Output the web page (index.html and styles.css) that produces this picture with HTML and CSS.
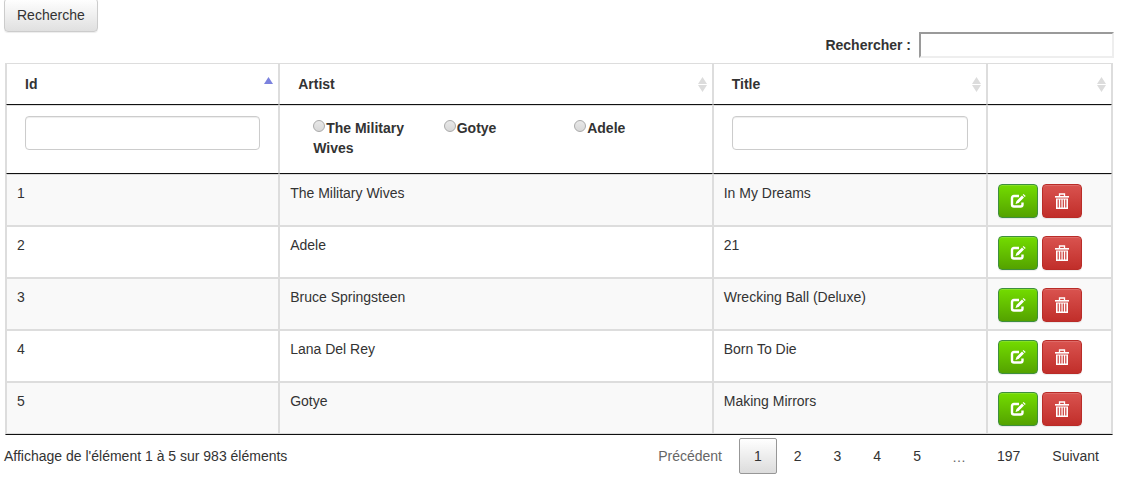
FILE: index.html
```html
<!DOCTYPE html>
<html lang="fr">
<head>
<meta charset="utf-8">
<title>Albums</title>
<link rel="stylesheet" href="styles.css">
</head>
<body>
<svg class="sprite" aria-hidden="true">
  <symbol id="sort" viewBox="0 0 9 15"><path d="M4.500 0L9 7H0zM0 8h9l-4.500 7z"/></symbol>
  <symbol id="sort-up" viewBox="0 0 9 15"><path d="M4.500 0L9 7H0z"/></symbol>
  <symbol id="edit" viewBox="0 0 16 14">
    <path d="M9 2H4Q2 2 2 4v6.500q0 2 2 2h6.500q2 0 2-2V8.500" fill="none" stroke="currentColor" stroke-width="2.400"/>
    <path d="M5.500 10l1-3L12 1.500l2 2L8.500 9zM12.700.8l.8-.8L15.700 2l-.9.900z" fill="currentColor"/>
  </symbol>
  <symbol id="trash" viewBox="0 0 14 16">
    <path d="M4.500 3V1h5v2" fill="none" stroke="currentColor" stroke-width="1.300"/>
    <path d="M0 3h14v1.600H0z" fill="currentColor"/>
    <path d="M1 5.400h12V16H1zM2.600 6.500v8h1.200v-8zM5.200 6.500v8h1.200v-8zM7.700 6.500v8h1.200v-8zM10.200 6.500v8h1.200v-8z" fill="currentColor" fill-rule="evenodd"/>
  </symbol>
</svg>
<main class="page">
  <button type="button" class="btn btn-default">Recherche</button>
  <div class="filter">
    <label class="filter-label" for="search">Rechercher :</label>
    <input class="filter-input" id="search" type="search">
  </div>
  <table class="grid">
    <colgroup><col class="col-id"><col class="col-artist"><col class="col-title"><col></colgroup>
    <thead>
      <tr>
        <th scope="col" aria-sort="ascending"><button type="button" class="sort">Id<svg class="sort-icon active"><use href="#sort-up"/></svg></button></th>
        <th scope="col"><button type="button" class="sort">Artist<svg class="sort-icon"><use href="#sort"/></svg></button></th>
        <th scope="col"><button type="button" class="sort">Title<svg class="sort-icon"><use href="#sort"/></svg></button></th>
        <th scope="col"><button type="button" class="sort" aria-label="Actions"><span></span><svg class="sort-icon"><use href="#sort"/></svg></button></th>
      </tr>
      <tr class="filters">
        <th><input class="control" type="text" aria-label="Id"></th>
        <th>
          <div class="choices">
            <label class="choice"><input class="radio" type="radio" name="artist">The Military Wives</label>
            <label class="choice"><input class="radio" type="radio" name="artist">Gotye</label>
            <label class="choice"><input class="radio" type="radio" name="artist">Adele</label>
          </div>
        </th>
        <th><input class="control" type="text" aria-label="Title"></th>
        <th></th>
      </tr>
    </thead>
    <tbody>
      <tr><td>1</td><td>The Military Wives</td><td>In My Dreams</td><td><div class="actions"><button type="button" class="btn btn-edit" aria-label="Modifier"><svg class="icon-edit"><use href="#edit"/></svg></button><button type="button" class="btn btn-delete" aria-label="Supprimer"><svg class="icon-trash"><use href="#trash"/></svg></button></div></td></tr>
      <tr><td>2</td><td>Adele</td><td>21</td><td><div class="actions"><button type="button" class="btn btn-edit" aria-label="Modifier"><svg class="icon-edit"><use href="#edit"/></svg></button><button type="button" class="btn btn-delete" aria-label="Supprimer"><svg class="icon-trash"><use href="#trash"/></svg></button></div></td></tr>
      <tr><td>3</td><td>Bruce Springsteen</td><td>Wrecking Ball (Deluxe)</td><td><div class="actions"><button type="button" class="btn btn-edit" aria-label="Modifier"><svg class="icon-edit"><use href="#edit"/></svg></button><button type="button" class="btn btn-delete" aria-label="Supprimer"><svg class="icon-trash"><use href="#trash"/></svg></button></div></td></tr>
      <tr><td>4</td><td>Lana Del Rey</td><td>Born To Die</td><td><div class="actions"><button type="button" class="btn btn-edit" aria-label="Modifier"><svg class="icon-edit"><use href="#edit"/></svg></button><button type="button" class="btn btn-delete" aria-label="Supprimer"><svg class="icon-trash"><use href="#trash"/></svg></button></div></td></tr>
      <tr><td>5</td><td>Gotye</td><td>Making Mirrors</td><td><div class="actions"><button type="button" class="btn btn-edit" aria-label="Modifier"><svg class="icon-edit"><use href="#edit"/></svg></button><button type="button" class="btn btn-delete" aria-label="Supprimer"><svg class="icon-trash"><use href="#trash"/></svg></button></div></td></tr>
    </tbody>
  </table>
  <footer class="footer">
    <div>Affichage de l'élément 1 à 5 sur 983 éléments</div>
    <nav class="pager" aria-label="Pagination">
      <a class="page-link disabled" href="#">Précédent</a>
      <a class="page-link current" href="#" aria-current="page">1</a>
      <a class="page-link" href="#">2</a>
      <a class="page-link" href="#">3</a>
      <a class="page-link" href="#">4</a>
      <a class="page-link" href="#">5</a>
      <span class="ellipsis">…</span>
      <a class="page-link" href="#">197</a>
      <a class="page-link" href="#">Suivant</a>
    </nav>
  </footer>
</main>
</body>
</html>
```
FILE: styles.css
```css
* { box-sizing: border-box; }

body {
  margin: 0;
  background: #fff;
  color: #333;
  font: 14px/20px "Liberation Sans", Arial, sans-serif;
}

.sprite { display: none; }

.page { padding: 0 9px 0 4px; }

.btn {
  display: inline-flex;
  align-items: center;
  justify-content: center;
  height: 34px;
  padding: 0 12px;
  border: 1px solid #ccc;
  border-radius: 4px;
  color: #333;
  font: inherit;
  box-shadow: inset 0 1px 0 rgba(255, 255, 255, .15), 0 1px 1px rgba(0, 0, 0, .075);
}

.btn-default {
  display: flex;
  margin-top: -2px;
  background: linear-gradient(#fff, #e0e0e0);
}

.filter {
  display: flex;
  align-items: center;
  justify-content: flex-end;
  gap: 8px;
  margin-bottom: 5px;
}

.filter-label { font-weight: bold; }

.filter-input {
  appearance: none;
  width: 195px;
  height: 26px;
  padding: 1px 4px;
  border: 2px solid;
  border-color: #9a9a9a #eee #eee #9a9a9a;
  background: #fff;
  font: inherit;
  outline: 0;
}

.grid {
  width: calc(100% - 2px);
  margin: 0 1px;
  border: solid #ddd;
  border-width: 0 1px;
  border-bottom: 1px solid #111;
  border-collapse: separate;
  border-spacing: 0;
  table-layout: fixed;
}

.col-id { width: 24.7%; }
.col-artist { width: 39.2%; }
.col-title { width: 24.8%; }

.grid th,
.grid td {
  border: 1px solid #ddd;
  text-align: left;
  vertical-align: top;
}

.grid th {
  padding: 10px 18px;
  border-bottom-color: #111;
}

.grid td { padding: 8px 10px; }

.grid tbody tr:nth-child(odd) { background: #f9f9f9; }

.sort {
  display: flex;
  align-items: center;
  justify-content: space-between;
  width: calc(100% + 13px);
  height: 20px;
  padding: 0;
  border: 0;
  background: none;
  color: inherit;
  font: inherit;
}

.sort-icon {
  width: 9px;
  height: 15px;
  fill: #dcdcdc;
}

.sort-icon.active { fill: #7b82de; }

.filters th { height: 69px; }

.control {
  display: block;
  width: 100%;
  height: 34px;
  padding: 6px 12px;
  border: 1px solid #ccc;
  border-radius: 4px;
  background: #fff;
  font: inherit;
  box-shadow: inset 0 1px 1px rgba(0, 0, 0, .075);
}

.choices {
  display: grid;
  grid-template-columns: repeat(3, 33%);
  padding-top: 2px;
}

.choice { padding: 0 15px; }

.radio {
  appearance: none;
  width: 12px;
  height: 12px;
  margin: 0 1px 1px 0;
  border: 1px solid #aaa;
  border-radius: 50%;
  background: linear-gradient(#e8e8e8, #d8d8d8);
}

.actions {
  display: flex;
  gap: 4px;
  margin: 1px 0 -1px;
}

.btn-edit {
  width: 40px;
  border-color: #3e8f3e;
  background: linear-gradient(#73dc00, #54a200);
  color: #fff;
}

.btn-delete {
  width: 40px;
  border-color: #b92c28;
  background: linear-gradient(#d9534f, #c12e2a);
  color: #fff;
}

.icon-edit {
  flex: none;
  width: 16px;
  height: 14px;
}

.icon-trash {
  flex: none;
  width: 14px;
  height: 16px;
}

.footer {
  display: flex;
  align-items: center;
  justify-content: space-between;
  margin-top: 3px;
}

.pager {
  display: flex;
  gap: 2px;
}

.page-link {
  padding: 7px 14px;
  border: 1px solid transparent;
  border-radius: 2px;
  color: #333;
  text-decoration: none;
}

.page-link.disabled { color: #666; }

.page-link.current {
  border-color: #979797;
  background: linear-gradient(#fff, #dcdcdc);
}

.ellipsis {
  padding: 9px 14px 7px;
  color: #666;
}
```
